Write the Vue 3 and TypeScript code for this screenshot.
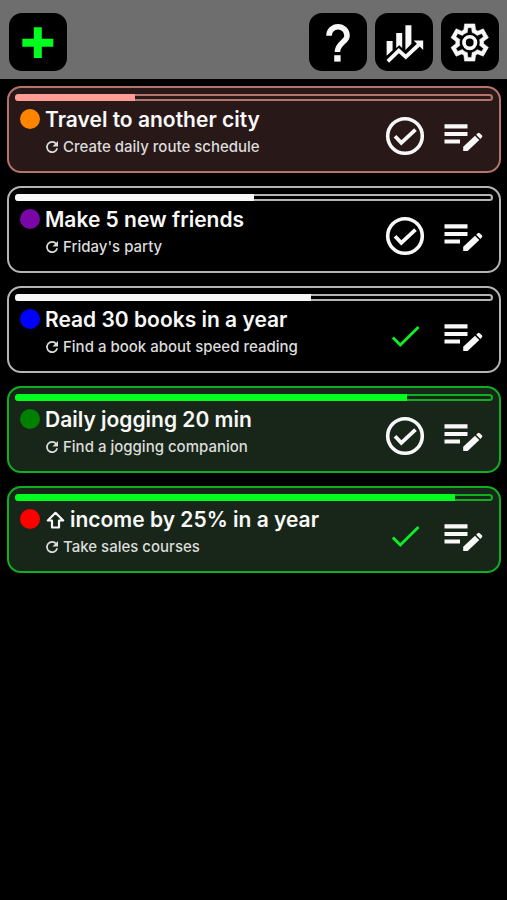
<script setup lang="ts">
import { ref } from 'vue'

type Tone = 'late' | 'plain' | 'good'

interface Goal {
  id: number
  title: string
  step: string
  color: string
  progress: number
  tone: Tone
  done: boolean
  increase?: boolean
}

const goals = ref<Goal[]>([
  { id: 1, title: 'Travel to another city', step: 'Create daily route schedule', color: '#ff8400', progress: 25, tone: 'late', done: false },
  { id: 2, title: 'Make 5 new friends', step: "Friday's party", color: '#7a06a8', progress: 50, tone: 'plain', done: false },
  { id: 3, title: 'Read 30 books in a year', step: 'Find a book about speed reading', color: '#0000ff', progress: 62, tone: 'plain', done: true },
  { id: 4, title: 'Daily jogging 20 min', step: 'Find a jogging companion', color: '#008000', progress: 82, tone: 'good', done: false },
  { id: 5, title: 'income by 25% in a year', step: 'Take sales courses', color: '#ff0000', progress: 92, tone: 'good', done: true, increase: true },
])

function toggle(goal: Goal) {
  goal.done = !goal.done
}
</script>

<template>
  <div class="app">
    <header class="toolbar">
      <button class="tool add" type="button" aria-label="Add goal">
        <svg viewBox="0 0 58 58"><path d="M24.800 14.300h8v11.400h11.500v8H32.800V45h-8V33.700H13.300v-8h11.500z" fill="#00ff1e" /></svg>
      </button>
      <button class="tool" type="button" aria-label="Help">
        <svg viewBox="0 0 58 58">
          <path d="M20 22.700A9 9 0 0 1 38 22.700C38 29 28.400 30 28.400 39" fill="none" stroke="currentColor" stroke-width="5.600" />
          <path d="M25.200 42.200h6.400v6.400h-6.400z" fill="currentColor" />
        </svg>
      </button>
      <button class="tool" type="button" aria-label="Statistics">
        <svg viewBox="0 0 58 58" fill="currentColor">
          <path d="M11.600 28h6v9.300l-6 5.500z" />
          <path d="M21.200 20h6v15l-3-2.800-3 2.800z" />
          <path d="M30.400 12.300h6V31l-6 6z" />
          <path d="M12.800 48.300l11-10.600 7 6.300L43.500 32" fill="none" stroke="currentColor" stroke-width="3.800" />
          <path d="M38.600 27.400h9.600v9.600z" />
        </svg>
      </button>
      <button class="tool" type="button" aria-label="Settings">
        <svg viewBox="0 0 58 58">
          <g transform="translate(6.400 7.200) scale(1.860)">
            <path
              fill="currentColor"
              fill-rule="evenodd"
              stroke="currentColor"
              stroke-width=".3"
              d="m9.250 22-.4-3.200q-.325-.125-.612-.3-.288-.175-.563-.375L4.700 19.375l-2.750-4.750 2.575-1.950Q4.500 12.500 4.500 12.337v-.675q0-.162.025-.337L1.950 9.375l2.750-4.750 2.975 1.250q.275-.2.575-.375.3-.175.6-.3l.4-3.200h5.500l.4 3.200q.325.125.613.3.287.175.562.375l2.975-1.250 2.750 4.750-2.575 1.950q.025.175.025.337v.675q0 .163-.05.338l2.575 1.950-2.750 4.750-2.950-1.250q-.275.2-.575.375-.3.175-.6.3l-.4 3.200ZM11 20h1.975l.35-2.650q.775-.2 1.438-.587.662-.388 1.212-.938l2.475 1.025.975-1.700-2.150-1.625q.125-.35.175-.737.05-.388.05-.788t-.05-.787q-.05-.388-.175-.738l2.150-1.625-.975-1.700-2.475 1.050q-.55-.575-1.212-.963-.663-.387-1.438-.587L13 4h-1.975l-.35 2.650q-.775.2-1.437.587-.663.388-1.213.938L5.550 7.150l-.975 1.700 2.150 1.600q-.125.375-.175.75-.05.375-.05.8 0 .4.05.775.05.375.175.75l-2.150 1.625.975 1.700 2.475-1.050q.55.575 1.213.963.662.387 1.437.587Z"
            />
            <circle cx="12" cy="12" r="3.100" fill="none" stroke="currentColor" stroke-width="2" />
          </g>
        </svg>
      </button>
    </header>

    <main>
      <ul class="goals">
        <li v-for="goal in goals" :key="goal.id" class="goal" :class="goal.tone">
          <div class="track" role="progressbar" :aria-label="goal.title" :aria-valuenow="goal.progress" aria-valuemin="0" aria-valuemax="100">
            <div class="fill" :style="{ width: goal.progress + '%' }"></div>
          </div>
          <div class="row">
            <span class="dot" :style="{ background: goal.color }"></span>
            <div class="text">
              <h2 class="title">
                <svg v-if="goal.increase" class="up" viewBox="0 0 20 20" role="img" aria-label="Increase">
                  <path d="M10.500 2.800L2.800 10.500H7V17.500H14V10.500H18.200z" fill="none" stroke="currentColor" stroke-width="2.200" stroke-linejoin="round" />
                </svg>
                <span>{{ goal.title }}</span>
              </h2>
              <p class="step">
                <svg class="repeat" viewBox="0 0 14 14" fill="none" aria-hidden="true">
                  <path d="M11.200 3.700A5.200 5.200 0 1 0 12.200 8.300" stroke="currentColor" stroke-width="1.700" />
                  <path d="M13 1v5.600H7.400z" fill="currentColor" />
                </svg>
                <span>{{ goal.step }}</span>
              </p>
            </div>
            <button class="action" type="button" aria-label="Toggle step done" :aria-pressed="goal.done" @click="toggle(goal)">
              <svg viewBox="0 0 58 58" fill="none">
                <path v-if="goal.done" d="M16.800 30.500L24.300 38L42.500 20" stroke="#0bef25" stroke-width="2.800" />
                <template v-else>
                  <circle cx="29" cy="29" r="17.300" stroke="currentColor" stroke-width="3.600" />
                  <path d="M19 29.300L25.300 35.800L39.500 22.700" stroke="currentColor" stroke-width="3.800" />
                </template>
              </svg>
            </button>
            <button class="action" type="button" aria-label="Edit goal">
              <svg viewBox="0 0 58 58" fill="currentColor">
                <path d="M10.500 17.300h23v4.200h-23zM10.500 24.900h23v4.200h-23zM10.500 32.400h15.500v4.200h-15.500z" />
                <path d="M29.200 44v-4.200L41 28.700l4.300 4.200L33.600 44z" />
                <path d="M42.200 27.700l1.500-1.500q1-1 2 0l2.200 2.100q1 1 0 2L46.400 31.900z" />
              </svg>
            </button>
          </div>
        </li>
      </ul>
    </main>
  </div>
</template>

<style>
body {
  background: #000;
}
</style>

<style scoped>
.app {
  min-height: 100vh;
  background: #000;
  color: #f8f8f8;
  font-family: Inter, 'Liberation Sans', sans-serif;
}

button {
  padding: 0;
  border: 0;
  color: inherit;
  cursor: pointer;
}

svg {
  display: block;
}

.toolbar {
  display: flex;
  gap: 8px;
  padding: 13px 8px 8px 9px;
  background: #6e6e6e;
}

.tool {
  width: 58px;
  height: 58px;
  border-radius: 13px;
  background: #000;
}

.add {
  margin-right: auto;
}

.goals {
  display: flex;
  flex-direction: column;
  gap: 13px;
  margin: 0;
  padding: 7px 6px 7px 7px;
  list-style: none;
}

.goal {
  --line: #b4b4b4;
  --bar: #f8f8f8;
  box-sizing: border-box;
  padding: 6px 6px 0;
  border: 2px solid var(--line);
  border-radius: 14px;
}

.late {
  --line: #b5736e;
  --bar: #ff9c95;
  background: #281918;
}

.good {
  --line: #12ae22;
  --bar: #00ff1e;
  background: #182619;
}

.track {
  height: 7px;
  border-radius: 4px;
  box-shadow: inset 0 0 0 2px var(--line);
  overflow: hidden;
}

.fill {
  height: 100%;
  background: var(--bar);
}

.row {
  display: flex;
  align-items: center;
  height: 70px;
  padding: 0 1px 0 5px;
}

.dot {
  flex: none;
  align-self: flex-start;
  width: 20px;
  height: 20px;
  margin-top: 8px;
  border-radius: 50%;
}

.text {
  flex: 1;
  align-self: flex-start;
  min-width: 0;
  padding: 5px 0 0 5px;
  white-space: nowrap;
}

.title {
  display: flex;
  align-items: center;
  gap: 5px;
  margin: 0;
  font-size: 21px;
  font-weight: 600;
  line-height: 28px;
}

.up {
  width: 20px;
  height: 20px;
}

.step {
  display: flex;
  align-items: center;
  gap: 4px;
  margin: 0;
  color: #dcdcdc;
  font-size: 15px;
  font-weight: 500;
  line-height: 26px;
}

.repeat {
  width: 14px;
  height: 14px;
}

.action {
  flex: none;
  width: 58px;
  height: 58px;
  background: transparent;
}
</style>
